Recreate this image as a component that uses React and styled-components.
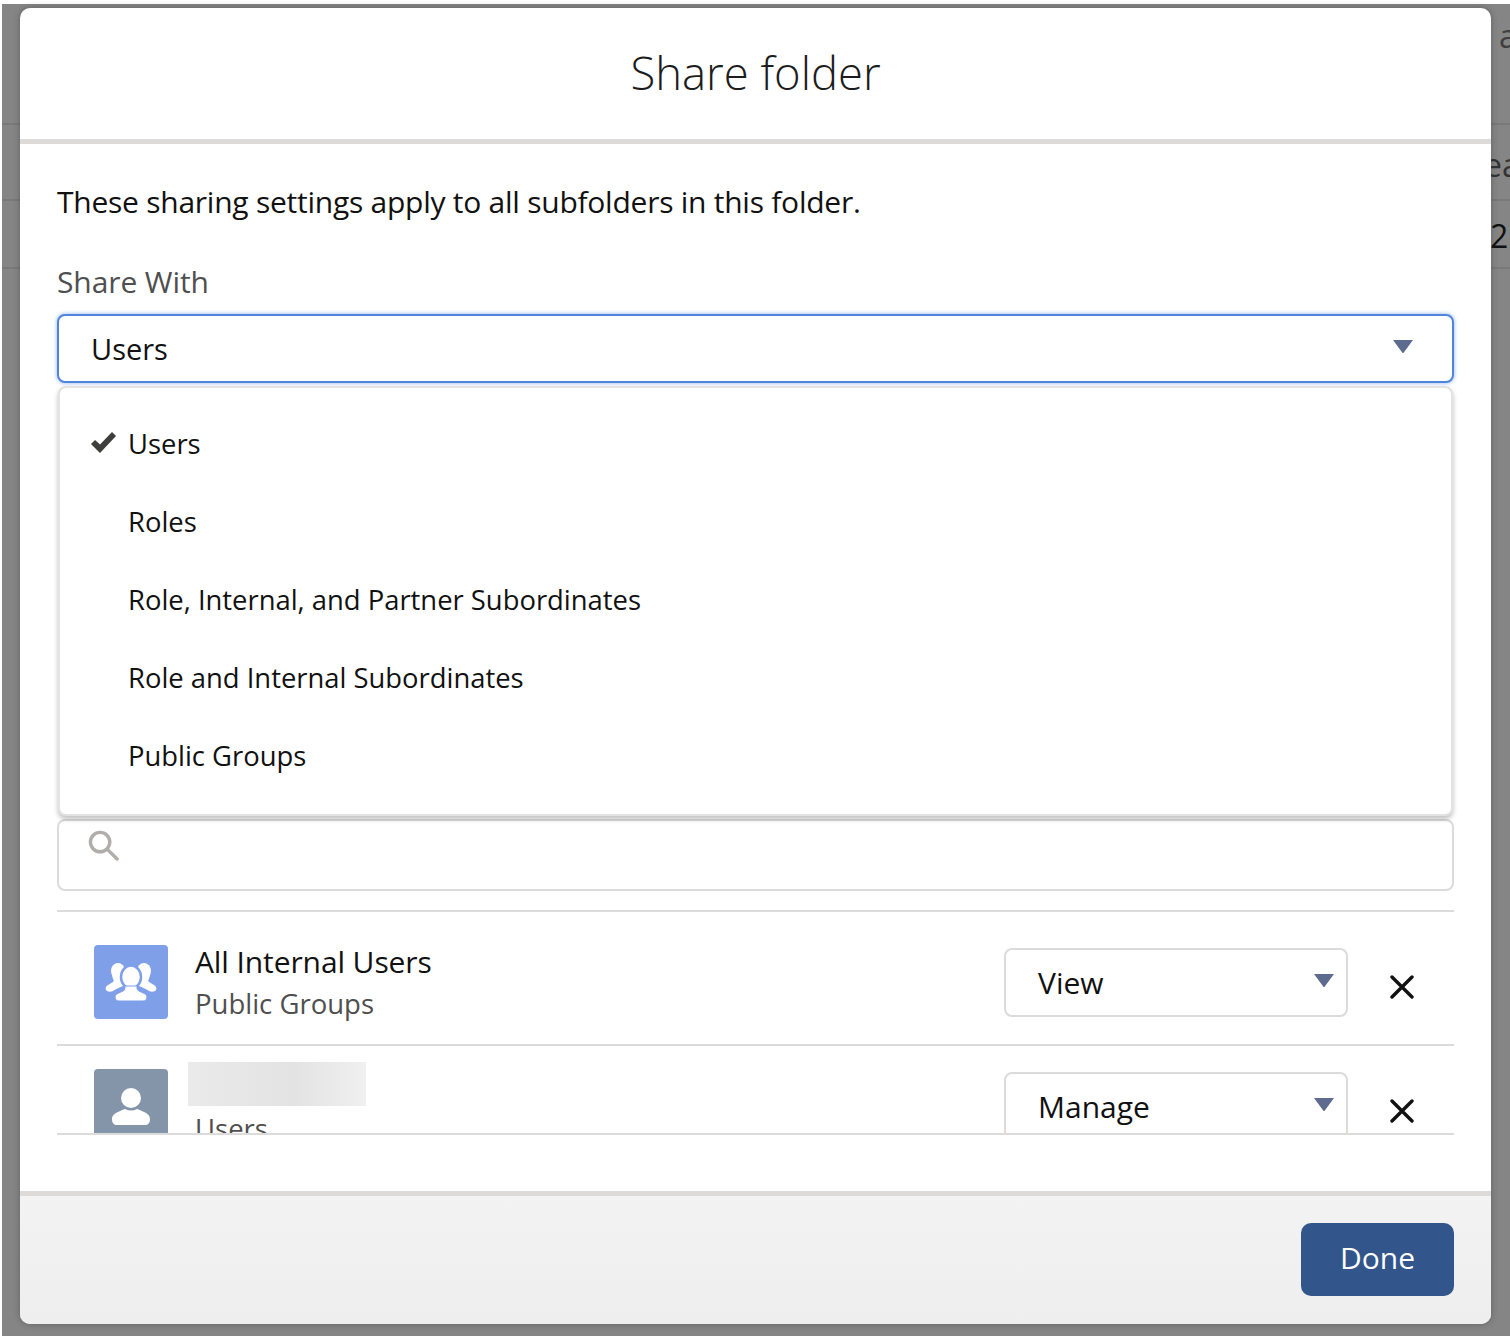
import React from 'react';
import styled, { createGlobalStyle } from 'styled-components';

const GlobalStyle = createGlobalStyle`
  html, body {
    margin: 0;
    padding: 0;
    background: #ffffff;
    font-family: "Open Sans", "Noto Sans", "Liberation Sans", sans-serif;
    color: #111111;
  }
`;

const Page = styled.div`
  position: relative;
  width: 1510px;
  height: 1336px;
  overflow: hidden;
`;

const Backdrop = styled.div`
  margin: 4px 0 0 2px;
  height: 1332px;
  background: #858585;
  display: flex;
  flex-direction: column;
`;

const BackRow = styled.div`
  height: ${p => p.$h}px;
  flex: none;
  border-bottom: 2px solid #797979;
  box-sizing: border-box;
  padding-left: ${p => p.$left}px;
  padding-top: ${p => p.$top}px;
  font-size: 32px;
  line-height: 36px;
  color: ${p => p.$color || '#333333'};
  white-space: nowrap;
`;

const Modal = styled.div`
  position: absolute;
  left: 20px;
  top: 8px;
  width: 1471px;
  height: 1316px;
  background: #ffffff;
  border-radius: 10px;
  display: flex;
  flex-direction: column;
  overflow: hidden;
  box-shadow: 0 0 6px rgba(50, 50, 50, 0.45);
`;

const Header = styled.header`
  height: 136px;
  flex: none;
  box-sizing: border-box;
  border-bottom: 5px solid #dddbda;
  display: flex;
  justify-content: center;
  padding-top: 36px;
`;

const Title = styled.h2`
  margin: 0;
  font-size: 45.4px;
  line-height: 56px;
  font-weight: 300;
  color: #1c1c1c;
`;

const Body = styled.div`
  flex: 1;
  padding: 38px 37px 0;
  min-height: 0;
`;

const Intro = styled.p`
  margin: 0;
  font-size: 30px;
  line-height: 40px;
  letter-spacing: -0.25px;
  color: #111111;
`;

const FieldLabel = styled.div`
  margin-top: 40px;
  font-size: 30px;
  line-height: 40px;
  letter-spacing: -0.1px;
  color: #4f4f4f;
`;

const SelectWrap = styled.div`
  position: relative;
  margin-top: 12px;
`;

const Select = styled.div`
  height: 69px;
  box-sizing: border-box;
  background: #ffffff;
  border-radius: 8px;
  border: 2px solid ${p => (p.$focus ? '#4f86dc' : '#dddbda')};
  box-shadow: ${p => (p.$focus ? '0 0 4px #8db2ec' : 'none')};
  display: flex;
  align-items: center;
  justify-content: space-between;
  padding: 0 ${p => (p.$small ? 12 : 39)}px 0 32px;
  margin-top: ${p => (p.$small ? 3 : 0)}px;
  font-size: ${p => (p.$small ? 30 : 29)}px;
  color: #111111;
  flex: none;
  width: ${p => (p.$small ? '344px' : 'auto')};
`;

const Caret = styled.svg`
  width: 20px;
  height: 13px;
  margin-top: -5px;
  flex: none;
  fill: #5d6b8f;
`;

const Menu = styled.div`
  position: absolute;
  left: 1px;
  right: 1px;
  top: 72px;
  height: 430px;
  box-sizing: border-box;
  background: #ffffff;
  border: 2px solid #e4e3e2;
  border-radius: 8px;
  box-shadow: 0 3px 5px rgba(0, 0, 0, 0.25);
  padding: 16px 0 0 31px;
  z-index: 2;
`;

const MenuItem = styled.div`
  height: 78px;
  display: flex;
  align-items: center;
  font-size: 27.4px;
  color: #111111;
`;

const CheckSlot = styled.span`
  width: 37px;
  flex: none;
  display: flex;
  align-items: center;
`;

const Search = styled.div`
  margin-top: 436px;
  height: 72px;
  box-sizing: border-box;
  border: 2px solid #dddbda;
  border-radius: 8px;
  padding: 9px 0 0 29px;
`;

const List = styled.div`
  margin-top: 19px;
  height: 225px;
  box-sizing: border-box;
  border-top: 2px solid #dddbda;
  border-bottom: 2px solid #dddbda;
  overflow: hidden;
`;

const Row = styled.div`
  height: 134px;
  box-sizing: border-box;
  border-bottom: 2px solid #dddbda;
  display: flex;
  align-items: flex-start;
  padding: ${p => p.$top}px 37px 0 37px;
`;

const Avatar = styled.div`
  width: 74px;
  height: 74px;
  flex: none;
  border-radius: 4px;
  background: ${p => p.$bg};
  display: flex;
  align-items: center;
  justify-content: center;
`;

const Info = styled.div`
  flex: 1;
  min-width: 0;
  margin: -4px 0 0 27px;
`;

const Name = styled.div`
  font-size: 30px;
  line-height: 42px;
  letter-spacing: -0.1px;
  color: #111111;
`;

const Sub = styled.div`
  font-size: 27.5px;
  line-height: 42px;
  color: #4f4f4f;
`;

const Redacted = styled.div`
  width: 178px;
  height: 44px;
  margin: -3px 0 2px -7px;
  background: linear-gradient(90deg, #eaeaea, #e3e3e3 60%, #f0f0f0);
`;

const Remove = styled.svg`
  width: 24px;
  height: 24px;
  flex: none;
  margin: 30px 3px 0 42px;
  stroke: #111111;
  stroke-width: 3.4;
  fill: none;
`;

const Footer = styled.footer`
  height: 133px;
  flex: none;
  box-sizing: border-box;
  border-top: 5px solid #dddbda;
  background: linear-gradient(#f3f3f3, #eeeeee);
  display: flex;
  justify-content: flex-end;
  padding: 27px 37px 0 0;
`;

const DoneButton = styled.button`
  width: 153px;
  height: 73px;
  border: none;
  border-radius: 10px;
  background: #32558b;
  color: #ffffff;
  font-family: inherit;
  font-size: 30px;
  padding: 0 0 5px;
`;

const CaretIcon = () => (
  <Caret viewBox="0 0 20 13">
    <path d="M0 0h20L10.8 12.4a1 1 0 0 1-1.6 0z" />
  </Caret>
);

const CheckIcon = () => (
  <svg width="25" height="22" viewBox="0 0 25 22">
    <path d="M0 12l4-4 5 4.500L21 0l4 4L9 21z" fill="#3e3e3c" />
  </svg>
);

const SearchIcon = () => (
  <svg width="31" height="31" viewBox="0 0 32 32" fill="none" stroke="#b0adab" strokeWidth="3.500">
    <circle cx="12.500" cy="12.500" r="10" />
    <path d="M20 20l10 10" strokeLinecap="round" />
  </svg>
);

const GroupIcon = () => (
  <svg width="52" height="38" viewBox="0 0 52 38" fill="#ffffff">
    <ellipse cx="13" cy="8" rx="7" ry="8" />
    <ellipse cx="39" cy="8" rx="7" ry="8" />
    <path d="M7 12h12l-1 11c-3 1-7 3-10 5-2 1-6 1-7-1-1-2 0-4 2-5l5-3c1-1 1-2 0-3z" />
    <path d="M45 12H33l1 11c3 1 7 3 10 5 2 1 6 1 7-1 1-2 0-4-2-5l-5-3c-1-1-1-2 0-3z" />
    <ellipse cx="26" cy="14" rx="10" ry="11.500" stroke="#7f9fe8" strokeWidth="2.500" />
    <path d="M20 23h12c0 3 0 4 2 5 4 2 8 3 8 6 0 3-2 4-4 4H14c-2 0-4-1-4-4 0-3 4-4 8-6 2-1 2-2 2-5z" stroke="#7f9fe8" strokeWidth="1" />
  </svg>
);

const UserIcon = () => (
  <svg width="40" height="40" viewBox="0 0 40 40" fill="#ffffff">
    <circle cx="20" cy="12" r="10" />
    <path d="M14 23c-8 3-13 5-13 10 0 4 2 6 5 6h28c3 0 5-2 5-6 0-5-5-7-13-10-4 2-8 2-12 0z" />
  </svg>
);

const CloseIcon = () => (
  <Remove viewBox="0 0 24 24">
    <path d="M2 2l20 20M22 2L2 22" strokeLinecap="round" />
  </Remove>
);

const menuOptions = ['Roles', 'Role, Internal, and Partner Subordinates', 'Role and Internal Subordinates', 'Public Groups'];

export default function App() {
  return (
    <Page>
      <GlobalStyle />
      <Backdrop>
        <BackRow $h={121} $left={1497} $top={14} $color="#3f3f3f">a</BackRow>
        <BackRow $h={76} $left={1482} $top={22}>ea</BackRow>
        <BackRow $h={68} $left={1488} $top={17} $color="#111111">2</BackRow>
      </Backdrop>
      <Modal>
        <Header>
          <Title>Share folder</Title>
        </Header>
        <Body>
          <Intro>These sharing settings apply to all subfolders in this folder.</Intro>
          <FieldLabel>Share With</FieldLabel>
          <SelectWrap>
            <Select $focus>
              Users
              <CaretIcon />
            </Select>
            <Menu>
              <MenuItem>
                <CheckSlot><CheckIcon /></CheckSlot>
                Users
              </MenuItem>
              {menuOptions.map(option => (
                <MenuItem key={option}>
                  <CheckSlot />
                  {option}
                </MenuItem>
              ))}
            </Menu>
          </SelectWrap>
          <Search>
            <SearchIcon />
          </Search>
          <List>
            <Row $top={33}>
              <Avatar $bg="#7f9fe8"><GroupIcon /></Avatar>
              <Info>
                <Name>All Internal Users</Name>
                <Sub>Public Groups</Sub>
              </Info>
              <Select $small>
                View
                <CaretIcon />
              </Select>
              <CloseIcon />
            </Row>
            <Row $top={23}>
              <Avatar $bg="#8494a9"><UserIcon /></Avatar>
              <Info>
                <Redacted />
                <Sub>Users</Sub>
              </Info>
              <Select $small>
                Manage
                <CaretIcon />
              </Select>
              <CloseIcon />
            </Row>
          </List>
        </Body>
        <Footer>
          <DoneButton>Done</DoneButton>
        </Footer>
      </Modal>
    </Page>
  );
}
